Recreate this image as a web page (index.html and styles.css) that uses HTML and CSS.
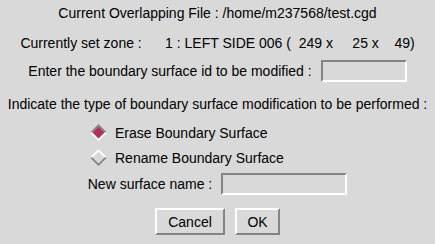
FILE: index.html
```html
<!DOCTYPE html>
<html lang="en">
<head>
    <meta charset="UTF-8">
    <title>Modify Boundary Surface</title>
    <link rel="stylesheet" href="styles.css">
</head>
<body>
    <div class="dialog">
        <div class="row row-file">Current Overlapping File : /home/m237568/test.cgd</div>
        <div class="row row-zone">Currently set zone :&nbsp;&nbsp;&nbsp;&nbsp;&nbsp;&nbsp;1 : LEFT SIDE 006 (&nbsp;&nbsp;249 x&nbsp;&nbsp;&nbsp;&nbsp;&nbsp;25 x&nbsp;&nbsp;&nbsp;&nbsp;49)</div>
        <div class="row row-id">
            <span>Enter the boundary surface id to be modified :</span>
            <input type="text" class="field field-id">
        </div>
        <div class="row row-indicate">Indicate the type of boundary surface modification to be performed :</div>

        <div class="radios">
            <label class="radio radio-erase">
                <svg width="17" height="17" viewBox="0 0 17 17">
                    <polygon points="0,8.5 8.5,0 17,8.5 14.5,8.5 8.5,2.5 2.5,8.5" fill="#848484"/>
                    <polygon points="0,8.5 8.5,17 17,8.5 14.5,8.5 8.5,14.5 2.5,8.5" fill="#ffffff"/>
                    <polygon points="8.5,2.5 14.5,8.5 8.5,14.5 2.5,8.5" fill="#b03060"/>
                </svg>
                <span>Erase Boundary Surface</span>
            </label>
            <label class="radio radio-rename">
                <svg width="17" height="17" viewBox="0 0 17 17">
                    <polygon points="0,8.5 8.5,0 17,8.5 14.5,8.5 8.5,2.5 2.5,8.5" fill="#ffffff"/>
                    <polygon points="0,8.5 8.5,17 17,8.5 14.5,8.5 8.5,14.5 2.5,8.5" fill="#848484"/>
                </svg>
                <span>Rename Boundary Surface</span>
            </label>
        </div>

        <div class="row row-name">
            <span>New surface name :</span>
            <input type="text" class="field field-name">
        </div>

        <div class="row row-buttons">
            <button class="btn btn-cancel">Cancel</button>
            <button class="btn btn-ok">OK</button>
        </div>
    </div>
</body>
</html>
```

FILE: styles.css
```css
* {
    margin: 0;
    padding: 0;
    box-sizing: border-box;
    font-family: "Liberation Sans", Arial, sans-serif;
}

body {
    background-color: #d9d9d9;
    color: #000;
    font-size: 14px;
}

.dialog {
    width: 435px;
    height: 244px;
    display: flex;
    flex-direction: column;
}

.row {
    display: flex;
    justify-content: center;
    align-items: center;
    white-space: nowrap;
}

.row-file {
    height: 26px;
}

.row-zone {
    height: 26px;
    margin-top: 4px;
}

.row-id {
    height: 22px;
    margin-top: 4px;
    gap: 9px;
}

.row-indicate {
    height: 26px;
    margin-top: 9px;
}

.field {
    height: 22px;
    background-color: #d9d9d9;
    border-style: solid;
    border-width: 2px;
    border-color: #848484 #ffffff #ffffff #848484;
    outline: none;
}

.field-id {
    width: 86px;
}

.field-name {
    width: 126px;
}

.radios {
    display: flex;
    flex-direction: column;
    padding-left: 90px;
    margin-top: 7px;
    gap: 8px;
}

.radio {
    display: flex;
    align-items: center;
    height: 17px;
    gap: 8px;
}

.row-name {
    height: 22px;
    margin-top: 7px;
    gap: 9px;
}

.row-buttons {
    margin-top: 13px;
    gap: 10px;
}

.btn {
    height: 27px;
    font-size: 14px;
    background-color: #d9d9d9;
    border-style: solid;
    border-width: 2px;
    border-color: #ffffff #848484 #848484 #ffffff;
    color: #000;
}

.btn-cancel {
    width: 70px;
}

.btn-ok {
    width: 45px;
}
```
